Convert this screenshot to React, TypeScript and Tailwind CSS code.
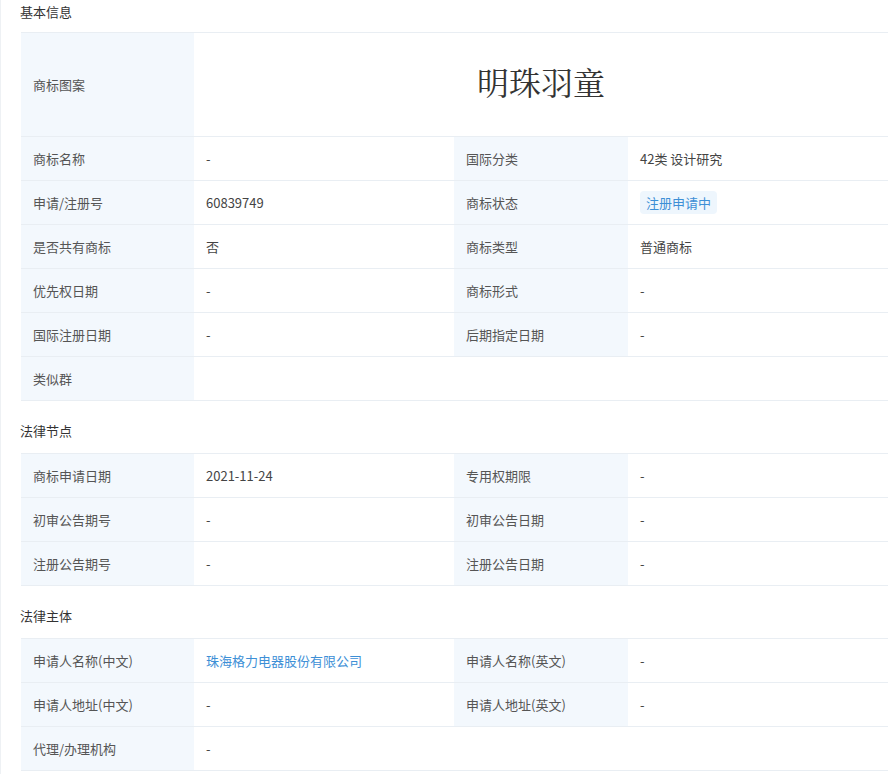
import React from "react";

const L = "bg-[#f3f8fd] px-3 text-[13px] text-[#555] flex items-center border-b border-[#e9eef3]";
const V = "px-3 text-[13px] text-[#444] flex items-center border-b border-[#e9eef3]";

type Cell = [string, React.ReactNode];

function Row({ a, b }: { a: Cell; b?: Cell }) {
  return (
    <div className="grid grid-cols-[173px_260px_174px_1fr] h-[44px]">
      <div className={L}>{a[0]}</div>
      <div className={V + (b ? "" : " col-span-3")}>{a[1]}</div>
      {b && <div className={L}>{b[0]}</div>}
      {b && <div className={V}>{b[1]}</div>}
    </div>
  );
}

function Title({ t }: { t: string }) {
  return <div className="h-[44px] flex items-center pl-[19px] text-[13px] text-[#333]">{t}</div>;
}

export default function App() {
  return (
    <div className="w-[895px] h-[774px] bg-white overflow-hidden border-l border-[#eef1f4]" style={{ fontFamily: '"Noto Sans CJK SC", "Noto Sans", sans-serif' }}>
      <div className="h-[24px] flex items-center pl-[19px] text-[13px] text-[#333]">基本信息</div>
      <div className="ml-[20px] mr-[7px] mt-[8px] border-t border-[#e9eef3]">
        <div className="grid grid-cols-[173px_1fr] h-[104px]">
          <div className={L}>商标图案</div>
          <div className="flex items-center justify-center border-b border-[#e9eef3] text-[32px] text-[#333] pb-[8px]" style={{ fontFamily: '"Noto Serif CJK SC", "Noto Sans CJK SC", serif', fontWeight: 400 }}>明珠羽童</div>
        </div>
        <Row a={["商标名称", "-"]} b={["国际分类", "42类 设计研究"]} />
        <Row a={["申请/注册号", "60839749"]} b={["商标状态", <span className="bg-[#eef6fd] text-[#3d8fd6] px-[6px] py-[2px] rounded-sm">注册申请中</span>]} />
        <Row a={["是否共有商标", "否"]} b={["商标类型", "普通商标"]} />
        <Row a={["优先权日期", "-"]} b={["商标形式", "-"]} />
        <Row a={["国际注册日期", "-"]} b={["后期指定日期", "-"]} />
        <Row a={["类似群", ""]} />
      </div>
      <div className="mt-[8px]"><Title t="法律节点" /></div>
      <div className="ml-[20px] mr-[7px] border-t border-[#e9eef3]">
        <Row a={["商标申请日期", "2021-11-24"]} b={["专用权期限", "-"]} />
        <Row a={["初审公告期号", "-"]} b={["初审公告日期", "-"]} />
        <Row a={["注册公告期号", "-"]} b={["注册公告日期", "-"]} />
      </div>
      <div className="mt-[8px]"><Title t="法律主体" /></div>
      <div className="ml-[20px] mr-[7px] border-t border-[#e9eef3]">
        <Row a={["申请人名称(中文)", <span className="text-[#3d8fd6]">珠海格力电器股份有限公司</span>]} b={["申请人名称(英文)", "-"]} />
        <Row a={["申请人地址(中文)", "-"]} b={["申请人地址(英文)", "-"]} />
        <Row a={["代理/办理机构", "-"]} />
      </div>
    </div>
  );
}
